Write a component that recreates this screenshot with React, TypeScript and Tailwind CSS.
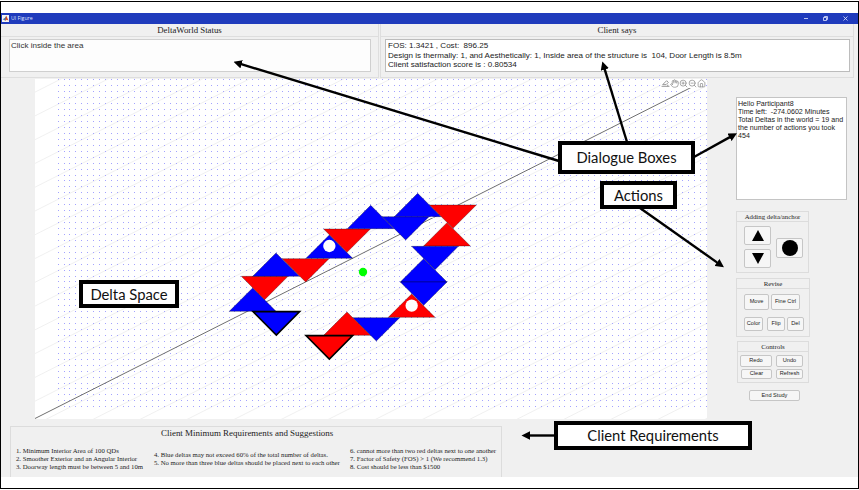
import type { ReactNode } from "react";
import { Hand, House, ZoomIn, ZoomOut } from "lucide-react";

const BLUE = "#0000ff";
const RED = "#ff0000";

type Delta = { x: number; y: number; up?: boolean; color: string; active?: boolean };

// x is the centre of the base, y the height of the base
const deltas: Delta[] = [
  { x: 98, y: 394, up: true, color: BLUE },
  { x: 134, y: 289, color: RED },
  { x: 168, y: 289, up: true, color: BLUE },
  { x: 257, y: 236, color: RED },
  { x: 328, y: 235, up: true, color: BLUE },
  { x: 381, y: 147, color: RED },
  { x: 452, y: 146, up: true, color: BLUE },
  { x: 557, y: 110, color: BLUE },
  { x: 593, y: 110, up: true, color: BLUE },
  { x: 699, y: 75, color: RED },
  { x: 681, y: 198, up: true, color: RED },
  { x: 645, y: 199, color: BLUE },
  { x: 611, y: 306, up: true, color: BLUE },
  { x: 611, y: 306, color: BLUE },
  { x: 575, y: 412, up: true, color: RED },
  { x: 469, y: 413, color: BLUE },
  { x: 381, y: 466, up: true, color: RED },
  { x: 169, y: 395, color: BLUE, active: true },
  { x: 328, y: 467, color: RED, active: true },
];

const contours = Array.from({ length: 29 }, (_, i) => 424.9 - 23.77 * (i - 14));

// one path per grid row, each dot a one-pixel square
const dotRows = Array.from({ length: 56 }, (_, r) => Math.round(79.4 + r * 5.944));
const dotCols = Array.from({ length: 111 }, (_, c) => Math.floor(58.2 + c * 5.893));

function DeltaSpace() {
  return (
    <svg className="block h-[340px] w-[672px] bg-white" viewBox="35 79 672 340">
      {contours.map((y) => (
        <line key={y} x1="35" y1={y} x2="707" y2={y - 339.3} stroke="#eeeeee" strokeWidth="0.9" />
      ))}
      {dotRows.map((y) => (
        <path key={y} d={dotCols.map((x) => `M${x} ${y}h1v1h-1z`).join("")} fill="#a3a3ff" />
      ))}
      <line x1="35" y1="418.5" x2="692" y2="87" stroke="#707070" strokeWidth="1" />
      <g transform="translate(220 180) scale(0.33333)">
        {deltas.map((d, i) => (
          <polygon
            key={i}
            points={`${d.x - 70},${d.y} ${d.x + 70},${d.y} ${d.x},${d.up ? d.y - 70 : d.y + 70}`}
            fill={d.color}
            stroke="#000"
            strokeOpacity={d.active ? 1 : 0.6}
            strokeWidth={d.active ? 4.8 : 1.5}
          />
        ))}
        <path d="M627 113a10 6 0 0 1 16 0z" fill="#fff" />
        <circle cx="328" cy="198" r="18.5" fill="#fff" />
        <circle cx="575" cy="377" r="18.5" fill="#fff" />
        <circle cx="429" cy="276" r="12.5" fill="#00ff00" />
      </g>
    </svg>
  );
}

function Btn({ className, children }: { className: string; children: ReactNode }) {
  return (
    <button
      className={`flex shrink-0 items-center justify-center whitespace-nowrap rounded-[2px] border border-[#c6c6c6] bg-[#f6f6f6] text-[5.6px] leading-none text-[#222] ${className}`}
    >
      {children}
    </button>
  );
}

function Panel({ title, className, children }: { title: string; className: string; children: ReactNode }) {
  return (
    <section className={`border border-[#dcdcdc] ${className}`}>
      <h2 className="h-[10px] border-b border-[#dcdcdc] text-center font-['Liberation_Serif',serif] text-[6.8px] leading-[9px] whitespace-nowrap text-[#222]">
        {title}
      </h2>
      {children}
    </section>
  );
}

function Callout({ className, children }: { className: string; children: ReactNode }) {
  return (
    <div
      className={`absolute flex items-center justify-center border-4 border-black bg-white font-['Lato',sans-serif] text-[14.8px] leading-none whitespace-nowrap text-[#111] ${className}`}
    >
      {children}
    </div>
  );
}

const arrows = [
  [559, 161, 234, 62],
  [627, 142, 602.5, 62],
  [694, 157, 736.5, 133.5],
  [640, 208, 723.5, 267],
  [555, 435.5, 522, 435.5],
];

export default function App() {
  return (
    <div className="relative flex h-[490px] w-[859px] flex-col overflow-hidden bg-white pt-[1px] font-['Liberation_Sans',sans-serif]">
      <div className="flex h-[488px] w-[859px] flex-col border border-black pt-[11px]">
        <header className="flex h-[11px] shrink-0 items-center bg-[#1f3bbc] pr-[9px] pl-[1px] text-white">
          <svg className="h-[7px] w-[7px]" viewBox="0 0 7 7">
            <rect width="7" height="7" fill="#f4f4f4" />
            <path d="M.6 4.2 2.8 3 4.2.8 4.5 4 3 5.5z" fill="#3c76b0" />
            <path d="M4.2.8 6.5 5.6 4.6 4.8 3 6z" fill="#d9481c" />
          </svg>
          <span className="ml-[2px] font-['Open_Sans',sans-serif] text-[5.2px] text-[#dfe5ff]">UI Figure</span>
          <svg className="ml-auto h-[7px] w-[47px]" viewBox="0 0 47 7" fill="none" stroke="#e4e8ff" strokeWidth="0.8">
            <path d="M2 3.5h4M41.5 1.5l4 4m0-4-4 4" />
            <path d="M21.5 2.5h3v3h-3zM22.5 2.5v-1h3v3h-1" />
          </svg>
        </header>
        <main className="flex h-[453px] shrink-0 flex-col bg-[#f0f0f0]">
          <div className="flex h-[55px] shrink-0 gap-[1px]">
            <section className="h-[54px] w-[378px] border-r border-b border-[#dedede]">
              <h1 className="h-[13px] border-b border-[#dedede] text-center font-['Liberation_Serif',serif] text-[8.8px] leading-[13px] text-[#222]">
                DeltaWorld Status
              </h1>
              <div className="mt-[2px] ml-[8px] h-[33px] w-[362px] border border-[#cfcfcf] bg-[#fdfdfd] pl-[1px] text-[8.05px] leading-[11.5px] text-[#333]">
                Click inside the area
              </div>
            </section>
            <section className="h-[54px] w-[474px] border-r border-b border-l border-[#dedede]">
              <h1 className="h-[13px] border-b border-[#dedede] text-center font-['Liberation_Serif',serif] text-[8.8px] leading-[13px] text-[#222]">
                Client says
              </h1>
              <div className="mt-[2px] ml-[4px] h-[33px] w-[465px] border border-[#bcbcbc] bg-white pt-[1px] pl-[2px] text-[8.05px] leading-[9.6px] whitespace-pre text-[#222]">
                {"FOS: 1.3421 , Cost:  896.25\nDesign is thermally: 1, and Aesthetically: 1, Inside area of the structure is  104, Door Length is 8.5m\nClient satisfaction score is : 0.80534"}
              </div>
            </section>
          </div>
          <div className="flex h-[340px] shrink-0">
            <div className="ml-[34px] w-[672px]">
              <DeltaSpace />
            </div>
            <aside className="ml-[29px] flex w-[112px] flex-col pt-[18px]">
              <div className="h-[103px] w-[111px] shrink-0 border border-[#c4c4c4] bg-white pt-[2px] pl-[1px] text-[7.1px] leading-[8.1px] whitespace-pre text-[#222]">
                {"Hello Participant8\nTime left:  -274.0602 Minutes\nTotal Deltas in the world = 19 and\nthe number of actions you took\n454"}
              </div>
              <Panel title="Adding delta/anchor" className="mt-[11px] h-[62px] w-[73px] shrink-0">
                <div className="mt-[4px] ml-[7px] flex items-center gap-[5px]">
                  <div className="flex flex-col gap-[4px]">
                    <Btn className="h-[19px] w-[27px]">
                      <svg className="h-[11px] w-[12px]" viewBox="0 0 12 11"><path d="M6 0 12 11H0z" /></svg>
                    </Btn>
                    <Btn className="h-[19px] w-[27px]">
                      <svg className="h-[11px] w-[12px]" viewBox="0 0 12 11"><path d="M6 11 12 0H0z" /></svg>
                    </Btn>
                  </div>
                  <Btn className="mt-[2px] h-[20px] w-[27px]">
                    <svg className="h-[16px] w-[16px] shrink-0" viewBox="0 0 16 16"><circle cx="8" cy="8" r="8" /></svg>
                  </Btn>
                </div>
              </Panel>
              <Panel title="Revise" className="mt-[5px] h-[59px] w-[74px] shrink-0">
                <div className="mt-[5px] ml-[7px] flex gap-[2px]">
                  <Btn className="h-[16px] w-[25px]">Move</Btn>
                  <Btn className="h-[16px] w-[29px]">Fine Ctrl</Btn>
                </div>
                <div className="mt-[7px] ml-[7px] flex">
                  <Btn className="h-[14px] w-[19px]">Color</Btn>
                  <Btn className="ml-[4px] h-[14px] w-[18px]">Flip</Btn>
                  <Btn className="ml-[2px] h-[14px] w-[17px]">Del</Btn>
                </div>
              </Panel>
              <Panel title="Controls" className="mt-[4px] ml-[1px] h-[42px] w-[72px] shrink-0">
                <div className="mt-[3px] ml-[2px] flex gap-[4px]">
                  <Btn className="h-[12px] w-[32px]">Redo</Btn>
                  <Btn className="h-[12px] w-[27px]">Undo</Btn>
                </div>
                <div className="mt-[2px] ml-[3px] flex gap-[4px]">
                  <Btn className="h-[10px] w-[31px]">Clear</Btn>
                  <Btn className="h-[10px] w-[27px]">Refresh</Btn>
                </div>
              </Panel>
              <Btn className="mt-[7px] ml-[13px] h-[11px] w-[51px]">End Study</Btn>
            </aside>
          </div>
          <section className="mt-[7px] ml-[9px] h-[51px] w-[492px] shrink-0 border border-b-0 border-[#dcdcdc] font-['Liberation_Serif',serif] text-[#222]">
            <h1 className="h-[14px] pl-[150px] text-[8.95px] leading-[12px] whitespace-nowrap">
              Client Minimum Requirements and Suggestions
            </h1>
            <div className="flex pt-[6px] text-[6.72px] leading-[7.8px] whitespace-pre">
              <div className="w-[138px] pl-[5px]">{"1. Minimum Interior Area of 100 QDs\n2. Smoother Exterior and an Angular Interior\n3. Doorway length must be between 5 and 10m"}</div>
              <div className="w-[195px] pt-[4px] pl-[5px]">{"4. Blue deltas may not exceed 60% of the total number of deltas.\n5. No more than three blue deltas should be placed next to each other"}</div>
              <div className="pl-[6px]">{"6. cannot more than two red deltas next to one another\n7. Factor of Safety (FOS) > 1 (We recommend 1.3)\n8. Cost should be less than $1500"}</div>
            </div>
          </section>
        </main>
      </div>

      <div className="absolute top-[79px] left-[661px] flex bg-white text-[#8c8c8c]">
        <svg className="h-[9px] w-[9px]" viewBox="0 0 16 16" fill="none" stroke="currentColor" strokeWidth="1.6">
          <path d="M1 13h14M3 10l7-7 3 3-4 4H3M12 10v3" />
        </svg>
        <Hand size={9} />
        <ZoomIn size={9} />
        <ZoomOut size={9} />
        <House size={9} />
      </div>

      <svg className="absolute top-0 left-0 h-[490px] w-[859px]" viewBox="0 0 859 490">
        <defs>
          <marker id="head" viewBox="0 0 8 8" refX="7.5" refY="4" markerWidth="8.5" markerHeight="8.5" orient="auto" markerUnits="userSpaceOnUse">
            <path d="M0 0 8 4 0 8z" />
          </marker>
        </defs>
        {arrows.map(([x1, y1, x2, y2]) => (
          <g key={x1}>
            <line
              x1={x1}
              y1={y1}
              x2={x2 - ((x2 - x1) / Math.hypot(x2 - x1, y2 - y1)) * 5}
              y2={y2 - ((y2 - y1) / Math.hypot(x2 - x1, y2 - y1)) * 5}
              stroke="#000"
              strokeWidth="2.4"
            />
            <line x1={x1} y1={y1} x2={x2} y2={y2} stroke="none" markerEnd="url(#head)" />
          </g>
        ))}
      </svg>

      <Callout className="top-[141px] left-[558px] h-[33px] w-[137px]">Dialogue Boxes</Callout>
      <Callout className="top-[181px] left-[600px] h-[28px] w-[77px]">Actions</Callout>
      <Callout className="top-[280px] left-[79px] h-[28px] w-[100px]">Delta Space</Callout>
      <Callout className="top-[421px] left-[554px] h-[29px] w-[198px] pb-[1px]">Client Requirements</Callout>
    </div>
  );
}
